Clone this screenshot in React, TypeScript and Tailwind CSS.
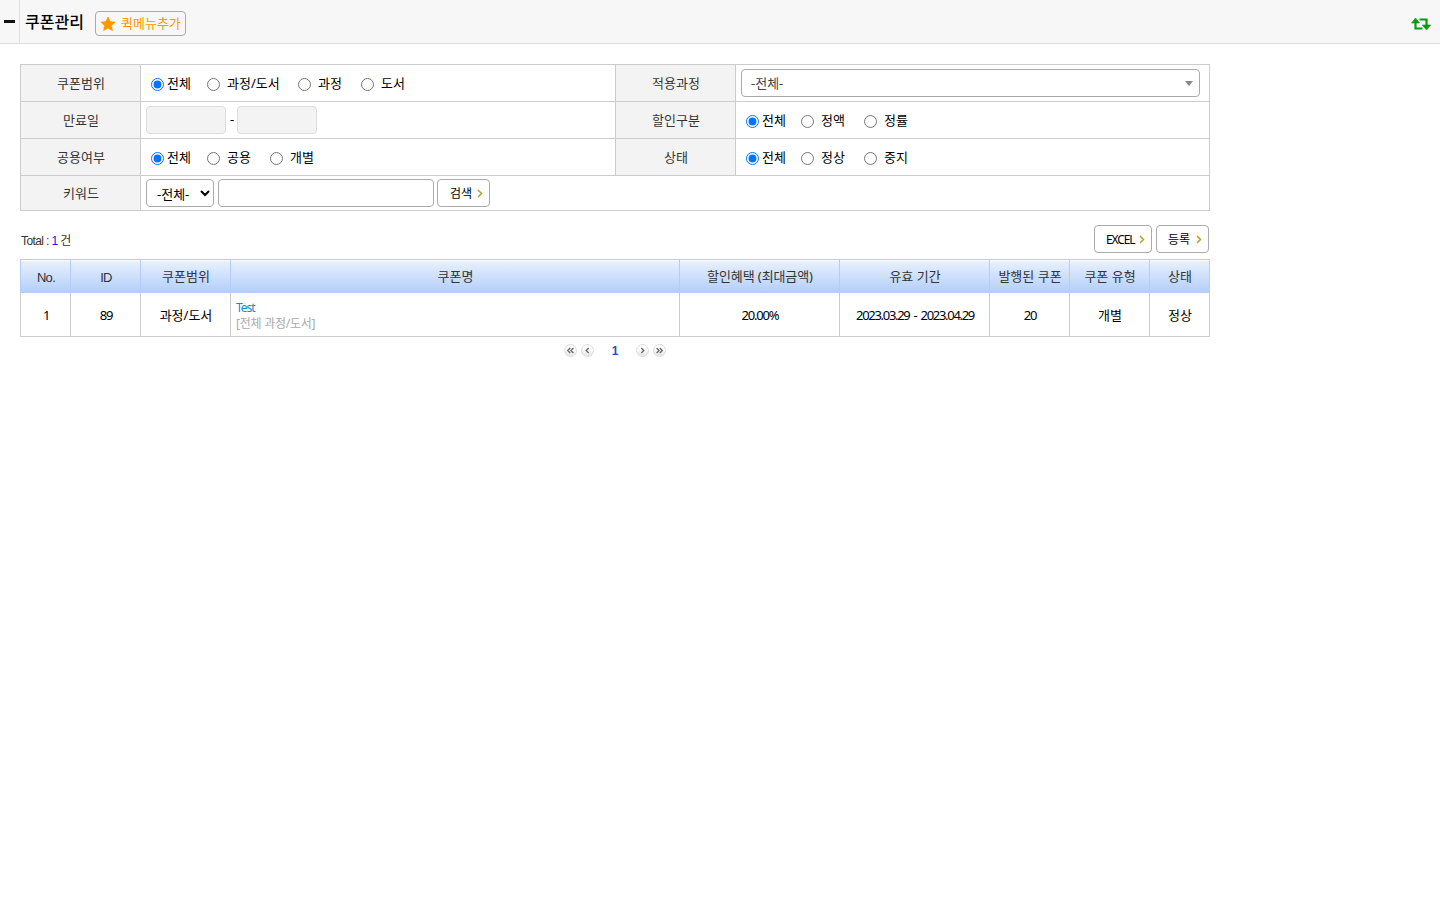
import React from "react";

type Option = { label: string; box: string };

function Radios({ name, options }: { name: string; options: Option[] }) {
  return (
    <div className="flex items-center pl-2.5">
      {options.map((o, i) => (
        <label key={o.label} className={`flex items-center whitespace-nowrap ${o.box} ${i === 0 ? "gap-[3px]" : "gap-[7px]"}`}>
          <input type="radio" name={name} defaultChecked={i === 0} className="m-0 mt-[3px] h-[13px] w-[13px] shrink-0" />
          <span>{o.label}</span>
        </label>
      ))}
    </div>
  );
}

function Label({ children }: { children: React.ReactNode }) {
  return (
    <div className="flex w-[120px] shrink-0 items-center justify-center border-r border-[#ccc] bg-[#f3f3f3] pb-px pl-px text-[#333]">
      {children}
    </div>
  );
}

function ActionButton({ children, className }: { children: React.ReactNode; className: string }) {
  return (
    <button className={`flex h-7 items-center justify-between rounded-[4px] border border-[#aaa] bg-white pr-1.5 text-[12px] ${className}`}>
      <span className="pt-0.5">{children}</span>
      <svg width="6" height="9" viewBox="0 0 6 9" fill="none" stroke="#b9a02c" strokeWidth="1.5">
        <path d="M1 1l3.5 3.5L1 8" />
      </svg>
    </button>
  );
}

function PageButton({ d }: { d: string }) {
  return (
    <button className="flex h-[13px] w-[13px] items-center justify-center">
      <svg width="13" height="13" viewBox="0 0 13 13" fill="none">
        <defs>
          <linearGradient id="pageFill" x1="0" y1="0" x2="0" y2="1">
            <stop offset="0.3" stopColor="#fff" />
            <stop offset="1" stopColor="#e4e4e4" />
          </linearGradient>
        </defs>
        <circle cx="6.5" cy="6.5" r="6" fill="url(#pageFill)" stroke="#dcdcdc" />
        <path d={d} stroke="#666" strokeWidth="1.3" />
      </svg>
    </button>
  );
}

const columns = [
  { title: "No.", box: "w-[50px]", text: "font-['Liberation_Sans'] tracking-[-0.7px]" },
  { title: "ID", box: "w-[70px]", text: "font-['Liberation_Sans'] tracking-[-0.7px]" },
  { title: "쿠폰범위", box: "w-[90px]", text: "" },
  { title: "쿠폰명", box: "w-[449px]", text: "" },
  { title: "할인혜택 (최대금액)", box: "w-[160px]", text: "tracking-[-0.1px]" },
  { title: "유효 기간", box: "w-[150px]", text: "" },
  { title: "발행된 쿠폰", box: "w-20", text: "" },
  { title: "쿠폰 유형", box: "w-20", text: "" },
  { title: "상태", box: "w-[59px]", text: "" },
];

const latin = "tracking-[-1.2px]";

export default function App() {
  return (
    <div className="h-[900px] w-full bg-white font-['Noto_Sans','Noto_Sans_CJK_KR',sans-serif] text-[13px] leading-4 text-black">
      <header className="flex h-11 items-center border-b border-[#ddd] bg-[#f7f7f7]">
        <div className="flex h-full w-5 items-center border-r border-[#ddd] pl-1">
          <div className="h-[3px] w-[11px] bg-[#111]" />
        </div>
        <h1 className="w-[75px] pl-[5px] text-[16px] font-medium">쿠폰관리</h1>
        <button className="mt-[3px] flex h-[25px] w-[91px] items-center rounded-[4px] border border-[#aaa] pl-1 text-[#ff9800]">
          <svg className="mt-px" width="16" height="16" viewBox="0 0 24 24" fill="#ff9800" stroke="#ff9800" strokeWidth="1" strokeLinejoin="round">
            <path d="M12 1.500l3.300 6.700 7.400 1-5.400 5.200 1.300 7.400L12 18.300l-6.600 3.500 1.300-7.400L1.300 9.200l7.400-1z" />
          </svg>
          <span className="ml-[5px] whitespace-nowrap">퀵메뉴추가</span>
        </button>
        <svg className="mr-2 ml-auto mt-1" width="22" height="14" viewBox="0 0 22 14" fill="none">
          <path d="M5.500 4v7.500h7M9.500 2.500h7v7.500" stroke="#0a9b12" strokeWidth="2.200" />
          <path d="M5.500 1L9.500 6h-8zM16.500 13l4.200-5h-8.400z" fill="#0a9b12" stroke="#0a9b12" strokeWidth="0.600" />
        </svg>
      </header>

      <main className="ml-5 w-[1190px] pt-5">
        <section className="border border-[#ccc]">
          <div className="flex h-[37px] border-b border-[#ccc]">
            <Label>쿠폰범위</Label>
            <div className="flex w-[475px] border-r border-[#ccc]">
              <Radios name="range" options={[{ label: "전체", box: "w-14" }, { label: "과정/도서", box: "w-[91px]" }, { label: "과정", box: "w-[63px]" }, { label: "도서", box: "" }]} />
            </div>
            <Label>적용과정</Label>
            <div className="flex items-center pl-[5px]">
              <div className="flex h-7 w-[459px] items-center justify-between rounded-[4px] border border-[#aaa] pr-1.5 pl-[9px] text-[#444]">
                <span>-전체-</span>
                <svg width="8" height="5" viewBox="0 0 8 5" fill="#888"><path d="M0 0h8L4 5z" /></svg>
              </div>
            </div>
          </div>
          <div className="flex h-[37px] border-b border-[#ccc]">
            <Label>만료일</Label>
            <div className="flex w-[475px] items-center border-r border-[#ccc] pl-[5px]">
              <div className="h-7 w-20 rounded-[4px] border border-[#ddd] bg-[#f3f3f3]" />
              <span className="w-[11px] pb-[3px] pl-px text-center">-</span>
              <div className="h-7 w-20 rounded-[4px] border border-[#ddd] bg-[#f3f3f3]" />
            </div>
            <Label>할인구분</Label>
            <Radios name="discount" options={[{ label: "전체", box: "w-[55px]" }, { label: "정액", box: "w-[63px]" }, { label: "정률", box: "" }]} />
          </div>
          <div className="flex h-[37px] border-b border-[#ccc]">
            <Label>공용여부</Label>
            <div className="flex w-[475px] border-r border-[#ccc]">
              <Radios name="shared" options={[{ label: "전체", box: "w-14" }, { label: "공용", box: "w-[63px]" }, { label: "개별", box: "" }]} />
            </div>
            <Label>상태</Label>
            <Radios name="status" options={[{ label: "전체", box: "w-[55px]" }, { label: "정상", box: "w-[63px]" }, { label: "중지", box: "" }]} />
          </div>
          <div className="flex h-[34px]">
            <Label>키워드</Label>
            <div className="flex items-center pl-[5px]">
              <div className="flex h-7 w-[68px] items-center justify-between rounded-[4px] border border-[#aaa] pr-[3px] pl-2.5">
                <span className="pt-px">-전체-</span>
                <svg width="10" height="7" viewBox="0 0 10 7" fill="none" stroke="#000" strokeWidth="2"><path d="M1 1l4 4 4-4" /></svg>
              </div>
              <input type="text" className="ml-1 h-7 w-[216px] rounded-[4px] border border-[#aaa]" />
              <ActionButton className="ml-[3px] w-[53px] pl-3">검색</ActionButton>
            </div>
          </div>
        </section>

        <div className="mt-3.5 flex h-[34px] justify-between pr-px">
          <div className="pt-2 pl-px font-['Liberation_Sans','Noto_Sans_CJK_KR',sans-serif] text-[12px] tracking-[-0.6px] text-[#333]">
            Total : <span className="text-[#1414e0]">1</span> 건
          </div>
          <div className="flex gap-1">
            <ActionButton className="w-[58px] pl-[11px] tracking-[-1.1px]">EXCEL</ActionButton>
            <ActionButton className="w-[53px] pl-[11px]">등록</ActionButton>
          </div>
        </div>

        <section>
          <div className="flex h-[34px] border border-b-0 border-[#b4ccfa] bg-linear-to-b from-[#e9f2ff] to-[#b3cdf9] text-[#333] shadow-[inset_0_1px_0_#fff]">
            {columns.map((c, i) => (
              <div key={c.title} className={`flex items-center justify-center whitespace-nowrap pl-px ${c.box} ${c.text} ${i < 2 ? "pt-[3px]" : "pb-px"} ${i < 8 ? "border-r border-[#b4ccfa]" : ""}`}>
                {c.title}
              </div>
            ))}
          </div>
          <div className="flex h-11 border border-t-0 border-[#ccc]">
            {columns.map((c, i) => (
              <div key={c.title} className={`flex items-center whitespace-nowrap pt-px ${i === 3 ? "pl-[5px]" : "justify-center pl-px"} ${c.box} ${i < 8 ? "border-r border-[#ccc]" : ""}`}>
                {i === 0 && <span className={latin}>1</span>}
                {i === 1 && <span className={latin}>89</span>}
                {i === 2 && <span>과정/도서</span>}
                {i === 3 && (
                  <div className="pt-0.5 text-[12px]">
                    <a className="block tracking-[-1px] text-[#0a8cd2]">Test</a>
                    <span className="block tracking-[-0.25px] text-[#aaa]">[전체 과정/도서]</span>
                  </div>
                )}
                {i === 4 && <span className={latin}>20.00%</span>}
                {i === 5 && <span className="tracking-[-1.3px] [word-spacing:2px]">2023.03.29 - 2023.04.29</span>}
                {i === 6 && <span className={latin}>20</span>}
                {i === 7 && <span>개별</span>}
                {i === 8 && <span>정상</span>}
              </div>
            ))}
          </div>
        </section>

        <nav className="mt-[7px] flex items-center justify-center">
          <PageButton d="M6.200 4L3.700 6.500 6.200 9M9.400 4L6.900 6.500 9.400 9" />
          <span className="w-1" />
          <PageButton d="M7.700 4L5.200 6.500 7.700 9" />
          <span className="w-[42px] pt-0.5 text-center font-['Liberation_Sans'] text-[12px] leading-[11px] font-bold text-[#1a56b0]">1</span>
          <PageButton d="M5.300 4l2.500 2.500L5.300 9" />
          <span className="w-1" />
          <PageButton d="M3.600 4l2.500 2.500L3.600 9M6.800 4l2.500 2.500L6.800 9" />
        </nav>
      </main>
    </div>
  );
}
